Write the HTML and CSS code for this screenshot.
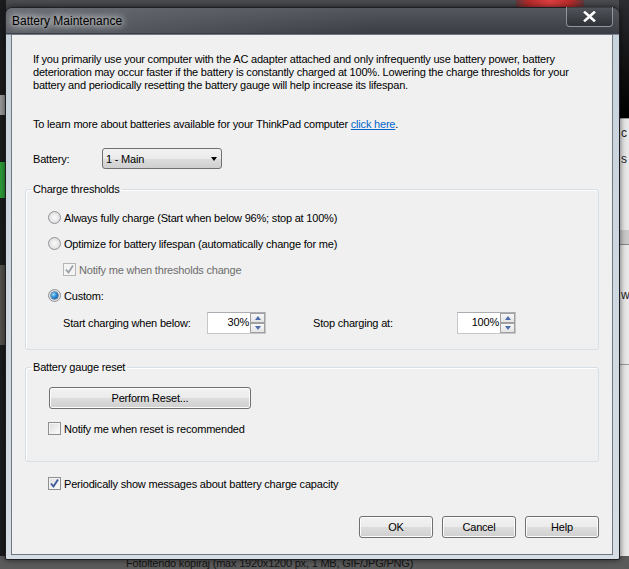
FILE: index.html
```html
<!DOCTYPE html>
<html>
<head>
<meta charset="utf-8">
<title>Battery Maintenance</title>
<link rel="stylesheet" href="styles.css">
</head>
<body>
<div class="desktop">
  <div class="bg-top"><span class="red-orb"></span></div>
  <div class="bg-left"><span class="bl-gray"></span><span class="bl-green"></span><span class="bl-gray2"></span></div>
  <div class="bg-right">
    <div class="br-dark"></div>
    <div class="br-line">c</div>
    <div class="br-line br-s">s</div>
    <div class="br-band"></div>
    <div class="br-line br-w">w</div>
  </div>
  <div class="bg-bottom">Fotoltendo kopiraj (max 1920x1200 px, 1 MB, GIF/JPG/PNG)</div>

  <div class="window">
    <div class="titlebar">
      <span class="title">Battery Maintenance</span>
      <span class="close">
        <svg width="13" height="11" viewBox="0 0 13 11"><path d="M2 1.5 L11 9.5 M11 1.5 L2 9.5" stroke="#fff" stroke-width="2.6" stroke-linecap="square"/></svg>
      </span>
    </div>
    <div class="client">
      <p class="intro">If you primarily use your computer with the AC adapter attached and only infrequently use battery power, battery<br>deterioration may occur faster if the battery is constantly charged at 100%. Lowering the charge thresholds for your<br>battery and periodically resetting the battery gauge will help increase its lifespan.</p>
      <p class="learn">To learn more about batteries available for your ThinkPad computer <a href="#" class="link">click here</a>.</p>
      <div class="battery-row">
        <span class="battery-label">Battery:</span>
        <div class="select"><span>1 - Main</span><span class="arrow"></span></div>
      </div>

      <fieldset class="group group-thresholds">
        <legend>Charge thresholds</legend>
        <div class="group-body">
          <div class="row"><span class="radio"></span><span class="lbl">Always fully charge (Start when below 96%; stop at 100%)</span></div>
          <div class="row"><span class="radio"></span><span class="lbl">Optimize for battery lifespan (automatically change for me)</span></div>
          <div class="row indent disabled"><span class="check checked dis"><svg width="11" height="11" viewBox="0 0 11 11"><path d="M2 5.5 L4.5 8.5 L9 1.5" fill="none" stroke="#9aa0a8" stroke-width="1.8"/></svg></span><span class="lbl">Notify me when thresholds change</span></div>
          <div class="row last"><span class="radio on"></span><span class="lbl">Custom:</span></div>
          <div class="spin-row indent">
            <span class="spin-label">Start charging when below:</span>
            <div class="spin"><span class="spin-text">30%</span><span class="spin-btns"><span class="sb"><i class="up"></i></span><span class="sb"><i class="down"></i></span></span></div>
            <span class="spin-label stop">Stop charging at:</span>
            <div class="spin"><span class="spin-text">100%</span><span class="spin-btns"><span class="sb"><i class="up"></i></span><span class="sb"><i class="down"></i></span></span></div>
          </div>
        </div>
      </fieldset>

      <fieldset class="group group-reset">
        <legend>Battery gauge reset</legend>
        <div class="group-body">
          <div class="btn reset-btn">Perform Reset...</div>
          <div class="row notify-row"><span class="check"></span><span class="lbl">Notify me when reset is recommended</span></div>
        </div>
      </fieldset>

      <div class="row periodic"><span class="check checked"><svg width="11" height="11" viewBox="0 0 11 11"><path d="M2 5.5 L4.5 8.5 L9 1.5" fill="none" stroke="#3f5a9c" stroke-width="1.9"/></svg></span><span class="lbl">Periodically show messages about battery charge capacity</span></div>

      <div class="buttons">
        <div class="btn">OK</div>
        <div class="btn">Cancel</div>
        <div class="btn">Help</div>
      </div>
    </div>
  </div>
</div>
</body>
</html>
```
FILE: styles.css
```css
* { box-sizing: border-box; }
html, body { margin: 0; padding: 0; }
body {
  width: 629px;
  height: 569px;
  overflow: hidden;
  background: #2a2c30;
  font-family: "Liberation Sans", Arial, sans-serif;
  font-size: 11px;
  letter-spacing: -0.2px;
  color: #000;
}
.desktop { position: relative; width: 629px; height: 569px; overflow: hidden; }

/* background (desktop canvas) */
.bg-top { position: absolute; left: 0; top: 0; width: 629px; height: 40px; background: linear-gradient(#4a4c50, #2e3034); }
.red-orb { position: absolute; left: 515px; top: -25px; width: 70px; height: 60px; border-radius: 50%;
  background: radial-gradient(circle at 50% 45%, #e04040 0%, #b42a2a 45%, rgba(140,30,30,0.4) 70%, rgba(60,60,60,0) 72%); }
.bg-left { position: absolute; left: 0; top: 0; width: 6px; height: 569px; background: #1b1c1e; }
.bl-gray { position: absolute; left: 0; top: 95px; width: 6px; height: 20px; background: #9a9a9a; }
.bl-green { position: absolute; left: 0; top: 162px; width: 6px; height: 36px; background: #2f9e3a; }
.bl-gray2 { position: absolute; left: 0; top: 265px; width: 6px; height: 80px; background: #55524e; }
.bg-right { position: absolute; left: 619px; top: 0; width: 10px; height: 569px; background: #e8e8e8;
  font-size: 12px; color: #222; }
.br-dark { height: 118px; background: linear-gradient(#2b2d31, #111 60%, #000); }
.br-line { height: 32px; line-height: 28px; padding-left: 2px; border-top: 1px solid #9a9a9a; }
.br-s { border-top: none; height: 60px; line-height: 18px; }
.br-band { height: 15px; background: #c9c9c9; border-bottom: 1px solid #888; margin-top: 20px; }
.br-w { border-top: none; margin-top: 40px; height: 80px; line-height: 20px; border-bottom: 1px solid #9a9a9a; }
.bg-bottom { position: absolute; left: 0; top: 556px; width: 629px; height: 13px; background: #5b5b5b;
  padding: 1px 0 0 126px; font-size: 11px; line-height: 12px; color: #151515; white-space: nowrap; }

/* window */
.window {
  position: absolute; left: 5px; top: 7px; width: 615px; height: 553px;
  display: flex; flex-direction: column;
  border-radius: 7px 7px 2px 2px;
  border: 1px solid #1c1e22;
  background: linear-gradient(#54585e 0px, #3a3e44 26px, #c9d3dc 27px, #d6dde4 100%);
  box-shadow: 0 0 6px rgba(0,0,0,0.6);
}
.titlebar { height: 25px; display: flex; align-items: center; padding-left: 6px;
  background: linear-gradient(90deg, rgba(120,124,130,0.55), rgba(40,44,50,0) 60%); border-radius: 6px 6px 0 0; }
.title { font-family: "Liberation Sans", Arial, sans-serif; font-size: 12px; color: #000; letter-spacing: 0;
  text-shadow: 0 0 6px rgba(255,255,255,0.9), 0 0 10px rgba(255,255,255,0.7), 0 0 14px rgba(220,220,220,0.6); }
.close { margin-left: auto; margin-right: 6px; align-self: flex-start; margin-top: -1px;
  width: 47px; height: 20px; display: flex; align-items: center; justify-content: center;
  border: 1px solid rgba(210,215,222,0.55); border-top: none; border-radius: 0 0 4px 4px;
  background: linear-gradient(rgba(80,84,90,0.6), rgba(40,42,46,0.7)); }
.client { flex: 1; margin: 1px 6px 4px 5px; background: #f0f0f0; border: 1px solid #6e7884;
  padding: 18px 13px 0 13px; }

p { margin: 0; }
.intro { margin-left: 8px; line-height: 13px; white-space: nowrap; }
.learn { margin: 26px 0 0 8px; line-height: 13px; }
.link { color: #0066cc; text-decoration: underline; }
.battery-row { margin: 17px 0 0 8px; display: flex; align-items: center; height: 21px; }
.battery-label { width: 69px; }
.select { width: 120px; height: 21px; border: 1px solid #707070; border-radius: 3px;
  background: linear-gradient(#f2f2f2 0%, #ebebeb 50%, #dddddd 51%, #cfcfcf 100%);
  display: flex; align-items: center; padding-left: 3px; position: relative; }
.select .arrow { margin-left: auto; margin-right: 4px; width: 0; height: 0;
  border-left: 3.5px solid transparent; border-right: 3.5px solid transparent; border-top: 4px solid #000; }

/* groups */
.group { margin: 14px 0 0 0; padding: 15px 0 15px 0; border: 1px solid #d5dfe5; border-radius: 3px;
  box-shadow: inset 1px 1px 0 #fff; min-inline-size: auto; }
.group legend { margin-left: 5px; padding: 0 2px; line-height: 13px; }
.group-body { padding-left: 22px; }
.row { display: flex; align-items: center; height: 13px; margin-bottom: 13px; }
.row.last { margin-bottom: 10px; }
.indent { margin-left: 15px; }
.lbl { margin-left: 3px; white-space: nowrap; }
.disabled .lbl { color: #6d6d6d; }

.radio { width: 13px; height: 13px; border-radius: 50%; border: 1px solid #8e9398; flex: none; position: relative;
  background: radial-gradient(circle at 50% 50%, #fbfbfb 0%, #e4e4e4 60%, #d0d0d0 100%); }
.radio.on::after { content: ""; position: absolute; left: 2px; top: 2px; width: 7px; height: 7px; border-radius: 50%;
  background: radial-gradient(circle at 35% 35%, #9fdcff 0%, #2c8ad4 45%, #0e4b8e 100%); box-shadow: 0 0 0 0.5px #1a3d66; }

.check { width: 13px; height: 13px; border: 1px solid #8e8f8f; flex: none; display: flex; align-items: center; justify-content: center;
  background: linear-gradient(135deg, #dcdcdc, #fdfdfd); box-shadow: inset 0 0 0 1px #f4f4f4; }
.check.dis { border-color: #b5b5b5; background: #f4f4f4; }

/* spinners */
.spin-row { display: flex; align-items: center; height: 22px; }
.spin-label { width: 144px; white-space: nowrap; }
.spin-label.stop { margin-left: 47px; }
.spin { display: flex; height: 22px; width: 59px; }
.spin-text { width: 43px; height: 22px; background: #fff; border: 1px solid #c5c7cb; border-top-color: #abadb3; border-right: none;
  text-align: right; padding: 3px 1px 0 0; }
.spin-btns { width: 16px; display: flex; flex-direction: column; border: 1px solid #c5c7cb; border-top-color: #abadb3; border-left: none; }
.sb { flex: 1; display: flex; align-items: center; justify-content: center; border: 1px solid #a0a0a0;
  background: linear-gradient(#f7f7f7, #e4e4e4); }
.sb i { width: 0; height: 0; border-left: 3.5px solid transparent; border-right: 3.5px solid transparent; }
.sb i.up { border-bottom: 4px solid #4d6ea8; }
.sb i.down { border-top: 4px solid #4d6ea8; }

/* buttons */
.btn { height: 22px; border: 1px solid #707070; border-radius: 3px; display: flex; align-items: center; justify-content: center;
  background: linear-gradient(#f2f2f2 0%, #ebebeb 50%, #dddddd 51%, #cfcfcf 100%);
  box-shadow: inset 0 0 0 1px #fcfcfc; }
.group-reset { margin-top: 11px; padding-top: 13px; padding-bottom: 26px; }
.reset-btn { width: 202px; margin-left: 1px; }
.notify-row { margin: 13px 0 0 0; }
.periodic { margin: 15px 0 0 23px; }
.buttons { display: flex; justify-content: flex-end; gap: 9px; margin-top: 26px; }
.buttons .btn { width: 74px; }
```
